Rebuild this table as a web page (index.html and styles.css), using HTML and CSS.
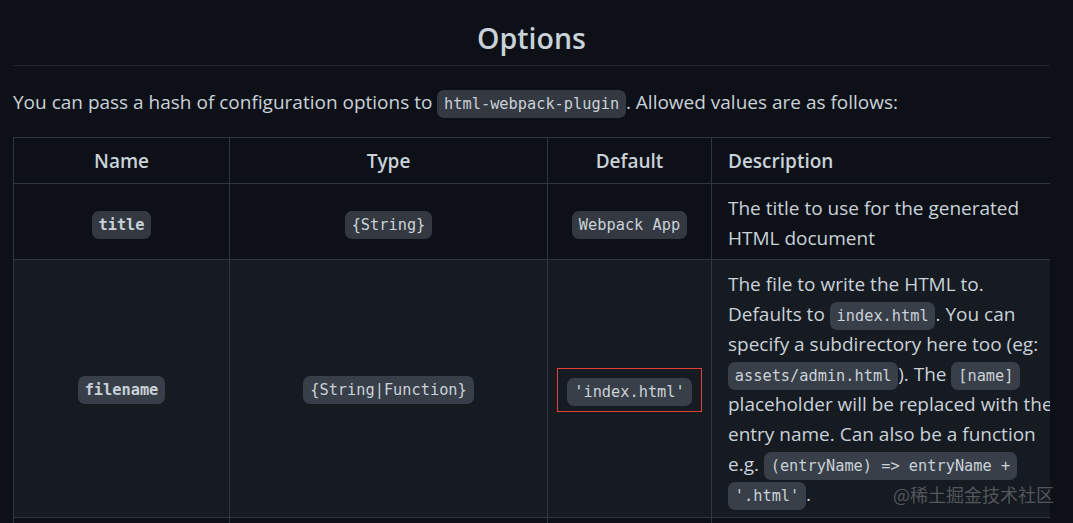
FILE: index.html
```html
<!DOCTYPE html>
<html>
<head>
<meta charset="utf-8">
<link rel="stylesheet" href="styles.css">
</head>
<body>
<article class="markdown-body">
  <h2 class="title">Options</h2>
  <p class="intro">You can pass a hash of configuration options to <code>html-webpack-plugin</code>. Allowed values are as follows:</p>
  <div class="table-wrap">
    <table class="options">
      <colgroup>
        <col class="c-name"><col class="c-type"><col class="c-default"><col class="c-desc">
      </colgroup>
      <thead>
        <tr><th class="center">Name</th><th class="center">Type</th><th class="center">Default</th><th class="left">Description</th></tr>
      </thead>
      <tbody>
        <tr class="odd">
          <td class="center"><code class="bold">title</code></td>
          <td class="center"><code>{String}</code></td>
          <td class="center"><code>Webpack App</code></td>
          <td class="left desc">The title to use for the generated<br>HTML document</td>
        </tr>
        <tr class="even">
          <td class="center"><code class="bold">filename</code></td>
          <td class="center"><code>{String|Function}</code></td>
          <td class="center tight"><span class="mark"><code>'index.html'</code></span></td>
          <td class="left desc">The file to write the HTML to.<br>Defaults to <code>index.html</code>. You can<br>specify a subdirectory here too (eg:<br><code>assets/admin.html</code>). The <code>[name]</code><br>placeholder will be replaced with the<br>entry name. Can also be a function<br>e.g. <code>(entryName) =&gt; entryName +</code><br><code>'.html'</code>.</td>
        </tr>
        <tr>
          <td class="center"></td><td class="center"></td><td class="center"></td><td class="left desc"></td>
        </tr>
      </tbody>
    </table>
  </div>
</article>
<div class="watermark">@稀土掘金技术社区</div>
</body>
</html>
```

FILE: styles.css
```css
html, body {
  margin: 0;
  padding: 0;
  background: #0d1117;
  height: 523px;
  overflow: hidden;
}

body {
  position: relative;
  color: #c9d1d9;
  font-family: "Open Sans", "Noto Sans", sans-serif;
  font-size: 19px;
  line-height: 30px;
}

.markdown-body {
  padding: 0 23px 0 13px;
}

.title {
  margin: 19px 0 21px;
  padding-bottom: 8px;
  text-align: center;
  font-size: 28.5px;
  line-height: 38px;
  font-weight: 600;
  border-bottom: 1px solid #21262d;
}

.intro {
  margin: 0 0 20px;
}

code {
  font-family: "DejaVu Sans Mono", "Liberation Mono", monospace;
  font-size: 15.3px;
  line-height: 18px;
  padding: 5px 6.8px;
  border-radius: 7px;
  background: #343941;
  -webkit-box-decoration-break: slice;
  box-decoration-break: slice;
}

.even code {
  background: #393f48;
}

code.bold {
  font-weight: bold;
}

.table-wrap {
  width: 1037px;
  overflow: hidden;
}

.options {
  border-collapse: collapse;
  table-layout: fixed;
  width: 1060px;
}

.c-name { width: 216px; }
.c-type { width: 318px; }
.c-default { width: 164px; }
.c-desc { width: 362px; }

.options th,
.options td {
  border: 1px solid #30363d;
  padding: 7px 16px 8px;
  vertical-align: middle;
}

.options th {
  padding-top: 8px;
  padding-bottom: 7px;
  font-weight: 600;
}

.options tr.odd td {
  padding-top: 9px;
  padding-bottom: 6px;
}

.options td.tight {
  padding-left: 0;
  padding-right: 0;
}

.options tr.even td.desc {
  padding-top: 9px;
  padding-bottom: 8px;
}

.center { text-align: center; }
.left { text-align: left; }

.desc {
  white-space: nowrap;
}

.options tr.even {
  background: #161b22;
}

.options tbody tr:last-child td {
  height: 40px;
}

.mark {
  display: inline-block;
  border: 1px solid #e5403a;
  padding: 4px 9px;
  margin-top: 4px;
  line-height: 34px;
}

.watermark {
  position: absolute;
  left: 893px;
  top: 481px;
  font-family: "Noto Sans CJK SC", sans-serif;
  font-size: 18px;
  line-height: 26px;
  color: rgba(200, 200, 200, 0.35);
}
```
